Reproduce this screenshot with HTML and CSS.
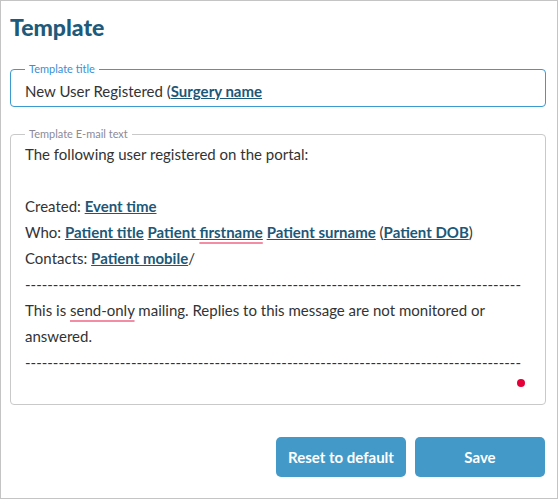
FILE: index.html
```html
<!DOCTYPE html>
<html lang="en">
<head>
    <meta charset="UTF-8">
    <meta name="viewport" content="width=device-width, initial-scale=1.0">
    <title>Template</title>
    <link rel="stylesheet" href="styles.css">
</head>
<body>

<div class="page">
    <h1 class="title">Template</h1>

    <fieldset class="field field-active">
        <legend>Template title</legend>
        <div class="value">New User Registered (<a href="#" class="tag">Surgery name</a></div>
    </fieldset>

    <fieldset class="field field-body">
        <legend>Template E-mail text</legend>
        <div class="line">The following user registered on the portal:</div>
        <div class="line">&nbsp;</div>
        <div class="line">Created: <a href="#" class="tag">Event time</a></div>
        <div class="line">Who: <a href="#" class="tag">Patient title</a> <a href="#" class="tag">Patient <span class="typo">firstname</span></a> <a href="#" class="tag">Patient surname</a> (<a href="#" class="tag">Patient DOB</a>)</div>
        <div class="line">Contacts: <a href="#" class="tag">Patient mobile</a>/</div>
        <div class="line rule">-----------------------------------------------------------------------------------------</div>
        <div class="line">This is <span class="typo">send-only</span> mailing. Replies to this message are not monitored or answered.</div>
        <div class="line rule">-----------------------------------------------------------------------------------------</div>
        <span class="status-dot"></span>
    </fieldset>

    <div class="actions">
        <button>Reset to default</button>
        <button>Save</button>
    </div>
</div>

</body>
</html>
```

FILE: styles.css
```css
body {
    margin: 0;
    padding: 0;
    font-family: Lato, "Liberation Sans", sans-serif;
    color: #333;
    background-color: #fff;
}
.page {
    box-sizing: border-box;
    width: 558px;
    height: 499px;
    border: 1px solid #c4c4c4;
    padding: 0 0 0 9px;
}
.title {
    margin: 12px 0 22px 0;
    font-size: 23px;
    line-height: 28px;
    font-weight: 900;
    color: #1e5a7a;
}
.field {
    position: relative;
    box-sizing: border-box;
    width: 536px;
    min-width: 0;
    margin: 0;
    border: 1px solid #c9c9c9;
    border-radius: 4px;
    padding: 6px 14px 5px 14px;
}
.field legend {
    padding: 0 4px;
    margin-left: 0;
    font-size: 11px;
    line-height: 12px;
    color: #8c8a98;
}
.field-active {
    border-color: #3b9ad0;
}
.field-active legend {
    color: #3b8fd6;
}
.value {
    font-size: 15px;
    line-height: 20px;
}
.field-body {
    margin-top: 21px;
    padding: 1px 22px 29px 14px;
}
.line {
    font-size: 15px;
    line-height: 26px;
}
.rule {
    white-space: nowrap;
}
.tag {
    color: #1c5878;
    font-weight: bold;
    text-decoration: underline;
}
.typo {
    text-decoration: underline 2px #f28da3;
    text-underline-offset: 4px;
}
.status-dot {
    position: absolute;
    right: 20px;
    bottom: 17px;
    width: 8px;
    height: 8px;
    border-radius: 50%;
    background-color: #e5003a;
}
.actions {
    display: flex;
    justify-content: flex-end;
    gap: 9px;
    width: 535px;
    margin-top: 32px;
}
.actions button {
    width: 130px;
    height: 40px;
    border: none;
    border-radius: 5px;
    background-color: #4399c8;
    color: #fff;
    font-family: Lato, "Liberation Sans", sans-serif;
    font-size: 15px;
    font-weight: bold;
    cursor: pointer;
}
```
